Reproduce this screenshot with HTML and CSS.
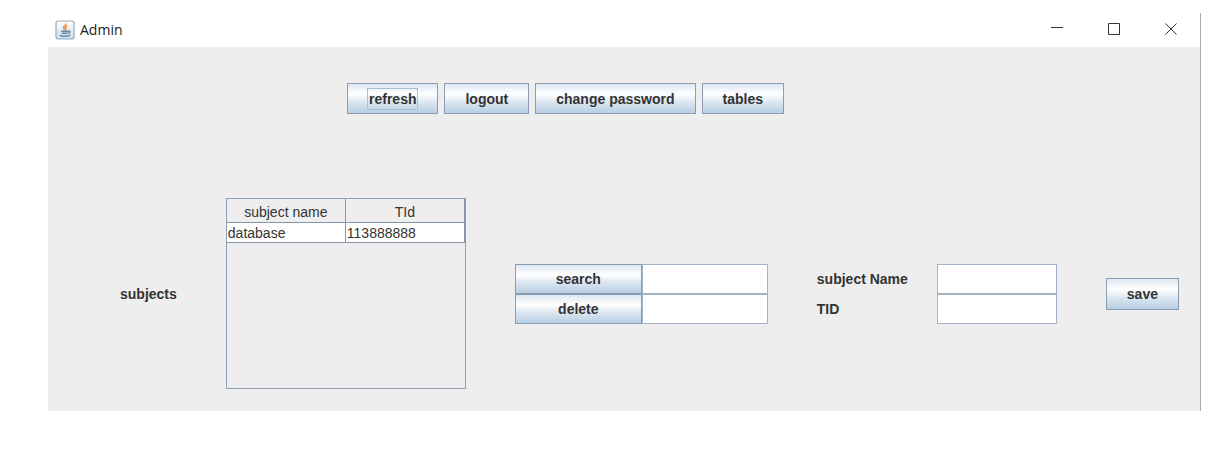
FILE: index.html
```html
<!DOCTYPE html>
<html lang="en">
<head>
<meta charset="utf-8">
<title>Admin</title>
<link rel="stylesheet" href="styles.css">
</head>
<body>
<main class="window">
  <header class="titlebar">
    <svg class="app-icon" viewBox="0 0 20 20" aria-hidden="true">
      <defs>
        <linearGradient id="tile" x1="0" y1="0" x2="0" y2="1">
          <stop offset="0" stop-color="#fdfdfd"/>
          <stop offset="1" stop-color="#cfdde8"/>
        </linearGradient>
      </defs>
      <rect x="1" y="1" width="18" height="18" rx="2" fill="url(#tile)" stroke="#93abbd" stroke-width="1.200"/>
      <path d="M11 3.400c1 1.700-3 2.600-2.500 4.300.2.900 1.100 1.300 1.200 2.300M12.300 6c-1.900.8-2.400 1.700-1.600 2.700.5.700.2 1.200-.3 1.600" fill="none" stroke="#ee9344" stroke-width="1.500"/>
      <path d="M6.200 11.300h7c2.400-.7 2.300 1.600-.2 2M6.800 13.300h5.600M4.800 15.400c2 1.100 8.500 1.100 10.500-.2" fill="none" stroke="#5f88a5" stroke-width="1.400"/>
    </svg>
    <h1 class="title">Admin</h1>
    <div class="window-controls">
      <button class="control" type="button" aria-label="Minimize"><svg viewBox="0 0 12 12"><path d="M0 4.500h12"/></svg></button>
      <button class="control" type="button" aria-label="Maximize"><svg viewBox="0 0 12 12"><path d="M.5.500h11v11H.5z"/></svg></button>
      <button class="control" type="button" aria-label="Close"><svg viewBox="0 0 12 12"><path d="M.5.500l11 11M11.500.500l-11 11"/></svg></button>
    </div>
  </header>
  <nav class="toolbar">
    <button class="button focused" type="button"><span class="focus-box">refresh</span></button>
    <button class="button" type="button">logout</button>
    <button class="button" type="button">change password</button>
    <button class="button" type="button">tables</button>
  </nav>
  <section class="content">
    <h2 class="label" id="subjects">subjects</h2>
    <div class="table-pane">
      <table class="grid" aria-labelledby="subjects">
        <thead><tr><th>subject name</th><th>TId</th></tr></thead>
        <tbody><tr><td>database</td><td>113888888</td></tr></tbody>
      </table>
    </div>
    <form class="actions">
      <button class="button" type="button" id="search">search</button>
      <input class="field" type="text" aria-labelledby="search">
      <button class="button" type="button" id="delete">delete</button>
      <input class="field" type="text" aria-labelledby="delete">
    </form>
    <form class="details">
      <label class="label" for="name">subject Name</label>
      <input class="field" type="text" id="name">
      <label class="label" for="tid">TID</label>
      <input class="field" type="text" id="tid">
    </form>
    <button class="button save" type="button">save</button>
  </section>
</main>
</body>
</html>
```
FILE: styles.css
```css
* {
  box-sizing: border-box;
}

body {
  margin: 0;
  padding: 13px 29px 54px 48px;
  background: #fff;
  color: #333;
  font: 14px/16px "Liberation Sans", Arial, sans-serif;
}

.window {
  background: #eee;
  border-right: 1px solid #a9a9a9;
}

.titlebar {
  display: flex;
  align-items: center;
  height: 34px;
  padding-left: 7px;
  background: #fff;
}

.app-icon {
  width: 20px;
  height: 20px;
  margin-right: 5px;
}

.title {
  margin: 0;
  color: #222;
  font: 14px/20px "Open Sans", "Noto Sans", sans-serif;
}

.window-controls {
  display: flex;
  margin-left: auto;
  padding-right: 1px;
}

.control {
  display: grid;
  place-items: center;
  width: 57px;
  height: 34px;
  padding: 0 0 2px;
  border: 0;
  background: none;
}

.control svg {
  width: 12px;
  height: 12px;
  fill: none;
  stroke: #333;
}

.toolbar {
  display: flex;
  gap: 6px;
  padding: 36px 0 0 299px;
}

.button {
  height: 31px;
  padding: 0 20px;
  border: 1px solid #8b9cae;
  background: linear-gradient(#dde8f3 0%, #fff 35%, #dce7f1 62%, #b8cfe5 100%);
  color: #333;
  font: bold 14px/16px "Liberation Sans", Arial, sans-serif;
}

.focused {
  padding: 0 19px;
}

.focus-box {
  display: block;
  padding: 2px 1px;
  border: 1px solid #a9bfd5;
}

.content {
  display: flex;
  align-items: center;
  justify-content: space-between;
  padding: 84px 21px 22px 72px;
}

.label {
  margin: 0;
  font-size: 14px;
  font-weight: bold;
}

.table-pane {
  width: 240px;
  height: 191px;
  border: 1px solid #8fa0b1;
}

.grid {
  width: 100%;
  border-spacing: 0;
  table-layout: fixed;
}

.grid th,
.grid td {
  padding: 0;
  border-right: 1px solid #8495a8;
  border-bottom: 1px solid #8495a8;
}

.grid th {
  height: 24px;
  padding-top: 3px;
  font-weight: normal;
  text-align: center;
}

.grid td {
  height: 20px;
  padding-left: 1px;
  background: #fff;
}

.actions,
.details {
  display: grid;
  align-items: center;
}

.actions {
  grid-template-columns: 127px 126px;
}

.details {
  grid-template-columns: 120px 120px;
}

.field {
  width: 100%;
  height: 30px;
  padding: 2px;
  border: 1px solid #a3b4c6;
  box-shadow: inset -1px -1px #fff;
  background: #fff;
  font: inherit;
}

.actions .button {
  height: 30px;
}

.save {
  height: 32px;
}
```
